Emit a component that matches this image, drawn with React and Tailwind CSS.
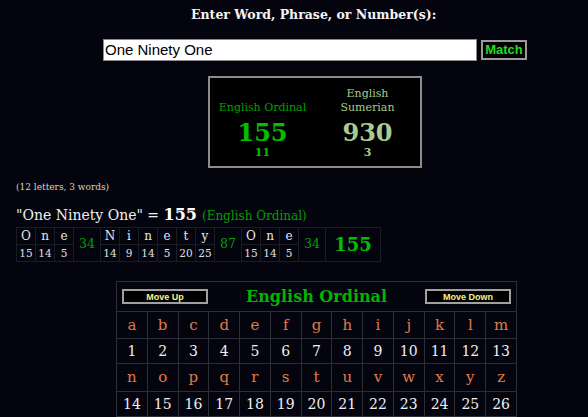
import React from 'react';

const words = [
  { letters: ['O', 'n', 'e'], values: [15, 14, 5], sum: 34 },
  { letters: ['N', 'i', 'n', 'e', 't', 'y'], values: [14, 9, 14, 5, 20, 25], sum: 87 },
  { letters: ['O', 'n', 'e'], values: [15, 14, 5], sum: 34 },
];

const alphabet = 'abcdefghijklmnopqrstuvwxyz'.split('');

const App = () => {
  const firstHalf = alphabet.slice(0, 13);
  const secondHalf = alphabet.slice(13);

  return (
    <div className="min-h-[417px] w-[588px] bg-[#04040f] font-['DejaVu_Serif',serif] text-white overflow-hidden">
      {/* Heading */}
      <div className="pt-[7px] pl-[191px] text-[12.5px] font-bold leading-[16px] text-[#f4f4f4]">
        Enter Word, Phrase, or Number(s):
      </div>

      {/* Input row */}
      <div className="mt-[16px] flex items-center pl-[103px]">
        <input
          type="text"
          defaultValue="One Ninety One"
          className="h-[22px] w-[374px] border border-[#8a8a8a] bg-white px-[1px] font-['Liberation_Sans',sans-serif] text-[15px] text-black outline-none"
        />
        <button className="ml-[4px] h-[20px] w-[46px] border-2 border-[#9a9a9a] bg-black font-['Liberation_Sans',sans-serif] text-[13px] font-bold leading-[16px] text-[#22dd22]">
          Match
        </button>
      </div>

      {/* Result box */}
      <div className="ml-[208px] mt-[15px] flex h-[92px] w-[214px] border-2 border-[#8c8c8c] bg-black">
        <div className="flex flex-1 flex-col items-center">
          <div className="flex h-[37px] flex-col justify-end text-[11px] leading-[14px] text-[#00a000]">English Ordinal</div>
          <div className="mt-[4px] text-[24px] font-bold leading-[28px] text-[#00c000]">155</div>
          <div className="text-[11px] font-bold leading-[12px] text-[#00c000]">11</div>
        </div>
        <div className="flex flex-1 flex-col items-center">
          <div className="flex h-[37px] flex-col justify-end text-center text-[11px] leading-[14px] text-[#a8cc90]">
            <span>English</span>
            <span>Sumerian</span>
          </div>
          <div className="mt-[4px] text-[24px] font-bold leading-[28px] text-[#a8cc90]">930</div>
          <div className="text-[11px] font-bold leading-[12px] text-[#a8cc90]">3</div>
        </div>
      </div>

      {/* Counts */}
      <div className="mt-[13px] pl-[16px] text-[9px] leading-[12px] text-[#dcd4bc]">
        (12 letters, 3 words)
      </div>

      {/* Equation */}
      <div className="mt-[13px] flex items-baseline pl-[16px] leading-[18px]">
        <span className="text-[14px] text-[#f0f0f0]">"One Ninety One" =&nbsp;</span>
        <span className="text-[16px] font-bold text-white">155</span>
        <span className="ml-[5px] text-[12px] text-[#00a000]">(English Ordinal)</span>
      </div>

      {/* Breakdown */}
      <div className="mt-[2px] pl-[16px]">
        <table className="border border-[#1c1c24]">
          <tbody>
            <tr className="h-[17px]">
              {words.map((w, wi) => (
                <React.Fragment key={wi}>
                  {w.letters.map((l, li) => (
                    <td key={li} className="w-[19px] border border-[#1c1c24] p-0 text-center text-[12px] leading-[16px] text-[#e8e8e8]">
                      {l}
                    </td>
                  ))}
                  <td rowSpan={2} className="w-[27px] border border-[#1c1c24] p-0 text-center text-[12.5px] text-[#00a000]">
                    {w.sum}
                  </td>
                </React.Fragment>
              ))}
              <td rowSpan={2} className="w-[55px] border border-[#1c1c24] p-0 text-center text-[18px] font-bold text-[#00c000]">
                155
              </td>
            </tr>
            <tr className="h-[17px]">
              {words.map((w, wi) =>
                w.values.map((v, vi) => (
                  <td key={`${wi}-${vi}`} className="w-[19px] border border-[#1c1c24] p-0 text-center text-[10.5px] leading-[16px] text-[#e0e0e0]">
                    {v}
                  </td>
                ))
              )}
            </tr>
          </tbody>
        </table>
      </div>

      {/* Cipher chart */}
      <div className="mt-[19px] pl-[116px]">
        <table className="w-[401px] table-fixed border border-[#2e2e36]">
          <tbody>
            <tr className="h-[30px]">
              <td colSpan={13} className="border border-[#2e2e36] p-0">
                <div className="flex items-center justify-between px-[5px]">
                  <button className="h-[15px] w-[86px] border-2 border-[#a0a0a0] bg-black font-['Liberation_Sans',sans-serif] text-[9px] font-bold leading-[10px] text-[#f4f48a]">
                    Move Up
                  </button>
                  <span className="text-[16px] font-bold text-[#00b400]">English Ordinal</span>
                  <button className="h-[15px] w-[86px] border-2 border-[#a0a0a0] bg-black font-['Liberation_Sans',sans-serif] text-[9px] font-bold leading-[10px] text-[#f4f48a]">
                    Move Down
                  </button>
                </div>
              </td>
            </tr>
            <tr className="h-[27px]">
              {firstHalf.map((l) => (
                <td key={l} className="border border-[#2e2e36] p-0 text-center text-[15px] text-[#e07a48]">
                  {l}
                </td>
              ))}
            </tr>
            <tr className="h-[25px]">
              {firstHalf.map((l, i) => (
                <td key={l} className="border border-[#2e2e36] p-0 text-center text-[14px] text-[#f0f0f0]">
                  {i + 1}
                </td>
              ))}
            </tr>
            <tr className="h-[28px]">
              {secondHalf.map((l) => (
                <td key={l} className="border border-[#2e2e36] p-0 text-center text-[15px] text-[#e07a48]">
                  {l}
                </td>
              ))}
            </tr>
            <tr className="h-[25px]">
              {secondHalf.map((l, i) => (
                <td key={l} className="border border-[#2e2e36] p-0 text-center text-[14px] text-[#f0f0f0]">
                  {i + 14}
                </td>
              ))}
            </tr>
          </tbody>
        </table>
      </div>
    </div>
  );
};

export default App;
